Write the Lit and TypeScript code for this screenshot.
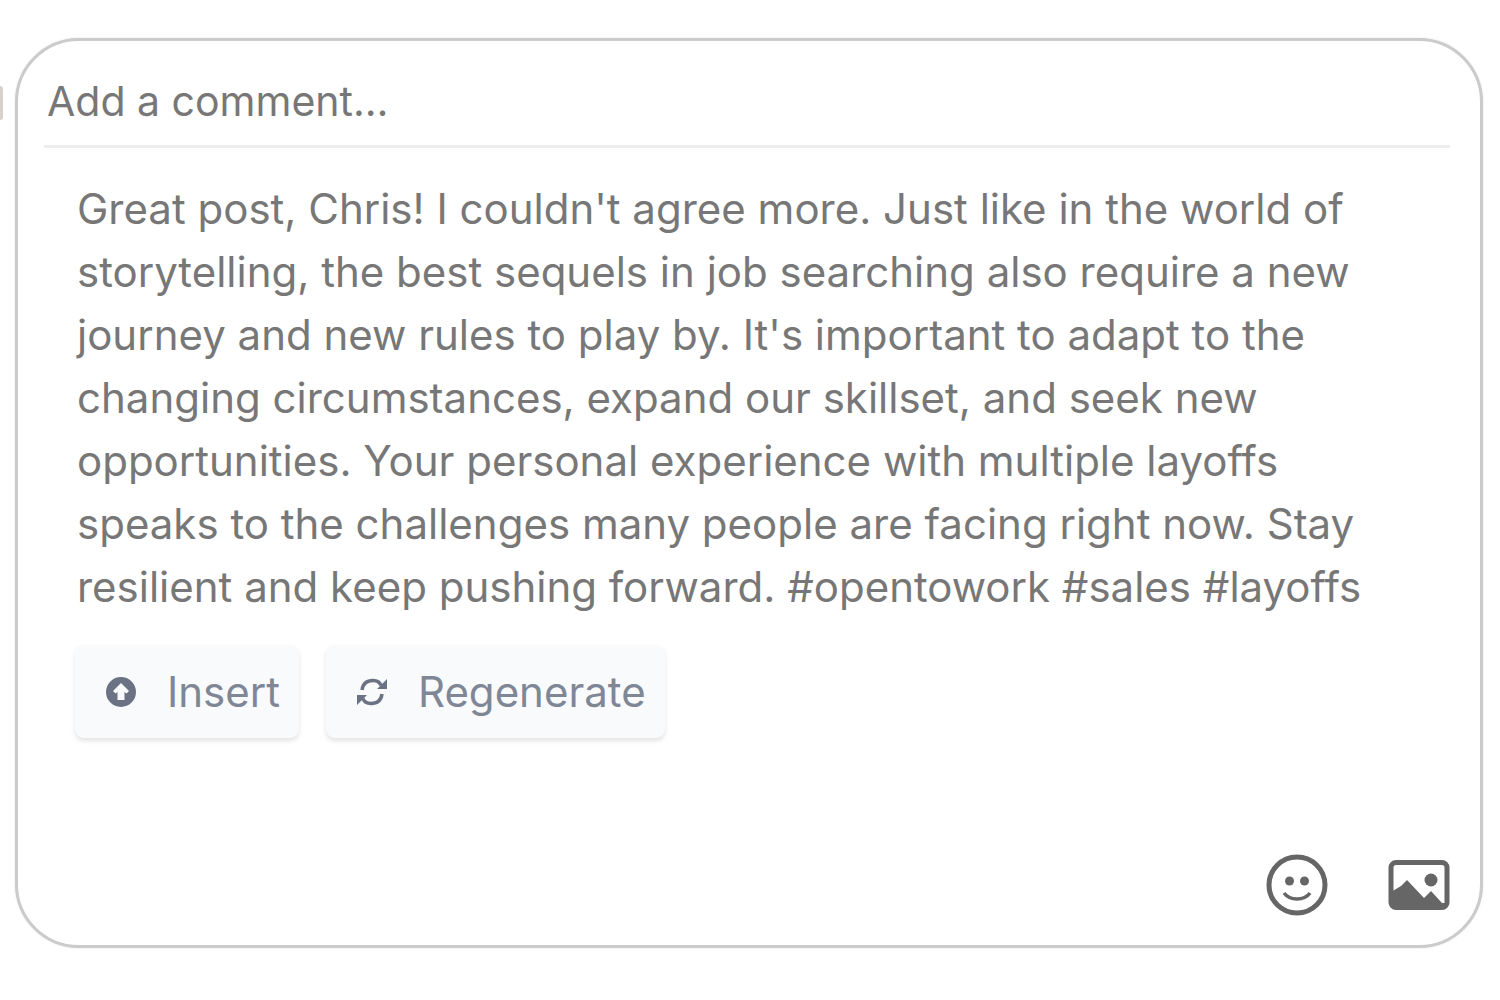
import { LitElement, html, css } from "lit";
import { customElement, state } from "lit/decorators.js";

const SUGGESTION =
  "Great post, Chris! I couldn't agree more. Just like in the world of storytelling, the best sequels in job searching also require a new journey and new rules to play by. It's important to adapt to the changing circumstances, expand our skillset, and seek new opportunities. Your personal experience with multiple layoffs speaks to the challenges many people are facing right now. Stay resilient and keep pushing forward. #opentowork #sales #layoffs";

@customElement("app-root")
export class AppRoot extends LitElement {
  static styles = css`
    :host {
      display: flex;
      align-items: flex-start;
      box-sizing: border-box;
      min-height: 100vh;
      padding: 38px 17px 40px 0;
      background: #fff;
      font-family: Inter, "Liberation Sans", sans-serif;
      font-size: 42px;
      color: #666;
    }
    .avatar {
      flex: none;
      width: 3px;
      height: 34px;
      margin: 48px 12px 0 0;
      border-radius: 0 3px 3px 0;
      background: #d8d0c9;
    }
    .card {
      flex: 1;
      min-width: 0;
      box-sizing: border-box;
      padding: 25px 30px 29px 26px;
      border: 3px solid #cbcbcb;
      border-radius: 64px;
      box-shadow: 0 0 2px #ddd;
      background: #fff;
    }
    .comment {
      display: block;
      box-sizing: border-box;
      width: 100%;
      height: 82px;
      padding: 0 3px 10px;
      border: 0;
      border-bottom: 3px solid #eceeee;
      outline: none;
      background: none;
      font-family: inherit;
      font-size: 41px;
      color: inherit;
    }
    .comment::placeholder {
      color: #777;
      opacity: 1;
    }
    .suggestion {
      padding: 29px 56px 0 33px;
    }
    .text {
      margin: 0;
      line-height: 63px;
      color: #777;
    }
    .actions {
      display: flex;
      gap: 27px;
      margin: 27px 0 0 -2px;
    }
    .action {
      display: flex;
      align-items: center;
      gap: 30px;
      height: 93px;
      padding: 0 19px 0 30px;
      border: 0;
      border-radius: 9px;
      background: #f9fafc;
      box-shadow: 0 3px 5px rgba(0, 0, 0, 0.11);
      font: inherit;
      color: #7f8796;
    }
    .glyph {
      width: 32px;
      height: 32px;
      color: #6b7284;
    }
    .tools {
      display: flex;
      justify-content: flex-end;
      gap: 60px;
      margin-top: 116px;
    }
    .tool {
      display: flex;
      padding: 0;
      border: 0;
      background: none;
      color: #666;
    }
    .tool svg {
      width: 62px;
      height: 62px;
    }
  `;

  @state() private draft = "";

  private onInput(e: Event) {
    this.draft = (e.target as HTMLInputElement).value;
  }

  private insert() {
    this.draft = SUGGESTION;
  }

  render() {
    return html`
      <div class="avatar"></div>
      <section class="card">
        <input
          class="comment"
          type="text"
          placeholder="Add a comment…"
          aria-label="Add a comment"
          .value=${this.draft}
          @input=${this.onInput}
        />
        <div class="suggestion">
          <p class="text">${SUGGESTION}</p>
          <div class="actions">
            <button class="action" type="button" @click=${this.insert}>
              <svg class="glyph" viewBox="0 0 32 32" aria-hidden="true">
                <path
                  fill="currentColor"
                  fill-rule="evenodd"
                  d="M16 1a15 15 0 1 0 0 30a15 15 0 1 0 0-30zM16 7l8 8l-2.500 2.500l-2-1.500v8h-7v-8l-2 1.500L8 15z"
                />
              </svg>
              Insert
            </button>
            <button class="action" type="button">
              <svg class="glyph" viewBox="0 0 32 32" aria-hidden="true">
                <g fill="none" stroke="currentColor" stroke-width="3.500">
                  <path d="M6 14C7 7 11 4.500 17 4.500c4 0 7 2 8 5" />
                  <path d="M26 18c-1 7-5 9.500-11 9.500c-4 0-7-2-8-5" />
                </g>
                <path fill="currentColor" d="M31 3v10H21zM1 29V19h10z" />
              </svg>
              Regenerate
            </button>
          </div>
        </div>
        <div class="tools">
          <button class="tool" type="button" aria-label="Add an emoji">
            <svg viewBox="0 0 62 62" aria-hidden="true">
              <circle cx="31" cy="31" r="28" fill="none" stroke="currentColor" stroke-width="5" />
              <circle cx="23.500" cy="27" r="4.500" fill="currentColor" />
              <circle cx="38.500" cy="27" r="4.500" fill="currentColor" />
              <path
                d="M18 39c3 4 8 6 13 6s10-2 13-6"
                fill="none"
                stroke="currentColor"
                stroke-width="3.500"
              />
            </svg>
          </button>
          <button class="tool" type="button" aria-label="Add a photo">
            <svg viewBox="0 0 62 62" aria-hidden="true">
              <rect x="3" y="8.500" width="56" height="45" rx="5" fill="none" stroke="currentColor" stroke-width="5" />
              <circle cx="43" cy="26" r="6.500" fill="currentColor" />
              <path fill="currentColor" d="M3 38L13 32L19 26L36 44L43 37L54 49H57V54H3z" />
            </svg>
          </button>
        </div>
      </section>
    `;
  }
}
